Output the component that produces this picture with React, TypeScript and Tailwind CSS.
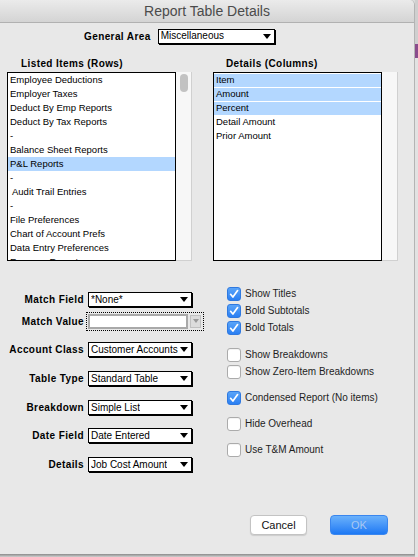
import React from 'react';

const leftItems = [
  'Employee Deductions',
  'Employer Taxes',
  'Deduct By Emp Reports',
  'Deduct By Tax Reports',
  '-',
  'Balance Sheet Reports',
  'P&L Reports',
  '-',
  'Audit Trail Entries',
  '-',
  'File Preferences',
  'Chart of Account Prefs',
  'Data Entry Preferences',
  'Expense Reports',
];

const rightItems = [
  { text: 'Item', sel: true },
  { text: 'Amount', sel: true },
  { text: 'Percent', sel: true },
  { text: 'Detail Amount', sel: false },
  { text: 'Prior Amount', sel: false },
];

const Arrow = () => (
  <span className="w-0 h-0 border-l-[4px] border-r-[4px] border-t-[5px] border-l-transparent border-r-transparent border-t-black" />
);

const Popup = ({ value, className }: { value: string; className: string }) => (
  <div
    className={`${className} h-[15px] bg-white border border-black shadow-[1px_1px_0_#000] flex items-center justify-between pl-[2px] pr-[3px] text-[10px] leading-none text-black font-['Liberation_Sans',sans-serif]`}
  >
    <span className="truncate">{value}</span>
    <Arrow />
  </div>
);

const Label = ({ children }: { children: React.ReactNode }) => (
  <span className="text-[10px] font-bold tracking-[0.4px] text-black font-['Liberation_Sans',sans-serif] whitespace-nowrap">
    {children}
  </span>
);

const Check = ({ checked, label }: { checked: boolean; label: string }) => (
  <div className="h-[17px] flex items-center">
    {checked ? (
      <div className="w-[14px] h-[14px] rounded-[3px] bg-gradient-to-b from-[#5aa4f8] to-[#2a7ff3] border border-[#2f79e0] flex items-center justify-center">
        <svg width="12" height="12" viewBox="0 0 12 12">
          <path d="M2.6 6.3 L4.9 9 L9.6 2.6" fill="none" stroke="#fff" strokeWidth="1.7" strokeLinecap="round" strokeLinejoin="round" />
        </svg>
      </div>
    ) : (
      <div className="w-[14px] h-[14px] rounded-[3px] bg-white border border-[#ababab] shadow-[inset_0_1px_0_#f4f4f4]" />
    )}
    <span className="ml-[4px] text-[10px] text-[#1e1e1e] font-['Liberation_Sans',sans-serif] whitespace-nowrap">{label}</span>
  </div>
);

export default function App() {
  return (
    <div className="w-[418px] h-[557px] flex bg-[#dcdcdc] overflow-hidden font-['Liberation_Sans',sans-serif]">
      <div className="w-[415px] h-[557px] flex flex-col">
        <div className="w-[415px] h-[554px] bg-[#e8e8e8] border-r border-[#b4b4b4] rounded-tr-[5px] flex flex-col">
          {/* title bar */}
          <div className="h-[23px] rounded-tr-[5px] bg-gradient-to-b from-[#ebebeb] to-[#d4d4d4] border-b border-[#b1b1b1] flex items-center justify-center">
            <span className="text-[14px] text-[#4b4b4b] pt-[1px]">Report Table Details</span>
          </div>

          {/* general area */}
          <div className="flex items-center pl-[84px] mt-[5px] h-[16px]">
            <Label>General Area</Label>
            <div className="ml-[7px]">
              <Popup value="Miscellaneous" className="w-[117px]" />
            </div>
          </div>

          <div className="flex mt-[12px]">
            {/* left column */}
            <div className="w-[206px] shrink-0 pl-[7px] flex flex-col">
              <div className="h-[12px] leading-[12px] pl-[14px]">
                <Label>Listed Items (Rows)</Label>
              </div>
              <div className="mt-[4px] h-[189px] w-[185px] flex">
                <div className="w-[169px] h-full border border-black bg-white overflow-hidden">
                  {leftItems.map((t, i) => (
                    <div
                      key={i}
                      className={`h-[14px] flex items-center text-[9.5px] text-black whitespace-nowrap ${
                        i === 6 ? 'bg-[#b3d7ff] pl-[2px]' : i === 8 ? 'pl-[4px]' : 'pl-[2px]'
                      }`}
                    >
                      {t}
                    </div>
                  ))}
                </div>
                <div className="flex-1 bg-[#f7f7f7] border-r border-b border-[#d0d0d0] flex justify-center pt-[2px]">
                  <div className="w-[8px] h-[18px] rounded-full bg-[#c2c2c2]" />
                </div>
              </div>

              {/* form fields */}
              <div className="mt-[31px] flex flex-col">
                <div className="flex items-center h-[15px]">
                  <div className="w-[77px] flex justify-end"><Label>Match Field</Label></div>
                  <div className="ml-[4px]"><Popup value="*None*" className="w-[104px]" /></div>
                </div>
                <div className="flex items-center h-[18px] mt-[5px]">
                  <div className="w-[77px] flex justify-end"><Label>Match Value</Label></div>
                  <div className="ml-[2px] h-[19px] w-[118px] border border-dotted border-black flex items-center pl-[1px]">
                    <div className="w-[100px] h-[15px] bg-white border-2 border-[#a9a9a9]" />
                    <div className="ml-[2px] w-[11px] h-[13px] bg-[#dcdcdc] border border-[#c0c0c0] flex items-center justify-center">
                      <span className="w-0 h-0 border-l-[3px] border-r-[3px] border-t-[4px] border-l-transparent border-r-transparent border-t-[#9a9a9a]" />
                    </div>
                  </div>
                </div>
                <div className="flex items-center h-[15px] mt-[12px]">
                  <div className="w-[77px] flex justify-end"><Label>Account Class</Label></div>
                  <div className="ml-[4px]"><Popup value="Customer Accounts" className="w-[104px]" /></div>
                </div>
                <div className="flex items-center h-[15px] mt-[14px]">
                  <div className="w-[77px] flex justify-end"><Label>Table Type</Label></div>
                  <div className="ml-[4px]"><Popup value="Standard Table" className="w-[104px]" /></div>
                </div>
                <div className="flex items-center h-[15px] mt-[14px]">
                  <div className="w-[77px] flex justify-end"><Label>Breakdown</Label></div>
                  <div className="ml-[4px]"><Popup value="Simple List" className="w-[104px]" /></div>
                </div>
                <div className="flex items-center h-[15px] mt-[13px]">
                  <div className="w-[77px] flex justify-end"><Label>Date Field</Label></div>
                  <div className="ml-[4px]"><Popup value="Date Entered" className="w-[104px]" /></div>
                </div>
                <div className="flex items-center h-[15px] mt-[14px]">
                  <div className="w-[77px] flex justify-end"><Label>Details</Label></div>
                  <div className="ml-[4px]"><Popup value="Job Cost Amount" className="w-[104px]" /></div>
                </div>
              </div>
            </div>

            {/* right column */}
            <div className="ml-[7px] flex flex-col">
              <div className="h-[12px] leading-[12px] pl-[13px]">
                <Label>Details (Columns)</Label>
              </div>
              <div className="mt-[4px] h-[189px] w-[185px] flex">
                <div className="w-[169px] h-full border border-black bg-white overflow-hidden pt-[1px]">
                  {rightItems.map((r, i) => (
                    <div key={i} className="h-[14px] border-b border-white">
                      <div
                        className={`h-[13px] flex items-center pl-[2px] text-[9.5px] text-black whitespace-nowrap ${
                          r.sel ? 'bg-[#b3d7ff]' : ''
                        }`}
                      >
                        {r.text}
                      </div>
                    </div>
                  ))}
                </div>
                <div className="flex-1 bg-[#f7f7f7] border-r border-b border-[#d0d0d0]" />
              </div>

              <div className="mt-[24px] pl-[14px] flex flex-col">
                <Check checked label="Show Titles" />
                <Check checked label="Bold Subtotals" />
                <Check checked label="Bold Totals" />
                <div className="mt-[10px]">
                  <Check checked={false} label="Show Breakdowns" />
                  <Check checked={false} label="Show Zero-Item Breakdowns" />
                </div>
                <div className="mt-[9px]">
                  <Check checked label="Condensed Report (No items)" />
                </div>
                <div className="mt-[9px]">
                  <Check checked={false} label="Hide Overhead" />
                </div>
                <div className="mt-[9px]">
                  <Check checked={false} label="Use T&M Amount" />
                </div>
              </div>

              <div className="mt-[57px] pl-[37px] flex">
                <div className="w-[57px] h-[20px] bg-white border border-[#c3c3c3] rounded-[4px] shadow-[0_1px_1px_rgba(0,0,0,0.12)] flex items-center justify-center text-[11px] text-[#111]">
                  Cancel
                </div>
                <div className="ml-[23px] w-[58px] h-[20px] rounded-[4px] bg-gradient-to-b from-[#6ab1fb] to-[#1b78f4] border border-[#3a86ee] flex items-center justify-center text-[11px] text-[#a8c8f2]">
                  OK
                </div>
              </div>
            </div>
          </div>
        </div>
        <div className="h-[3px] bg-gradient-to-b from-[#8a8a8a] to-[#d0d0d0]" />
      </div>
      <div className="flex-1 flex flex-col">
        <div className="h-[44px] bg-[#cfcfcf]" />
        <div className="h-[14px] bg-[#8a4c8c]" />
        <div className="flex-1 bg-[#e2e2e2]" />
      </div>
    </div>
  );
}
